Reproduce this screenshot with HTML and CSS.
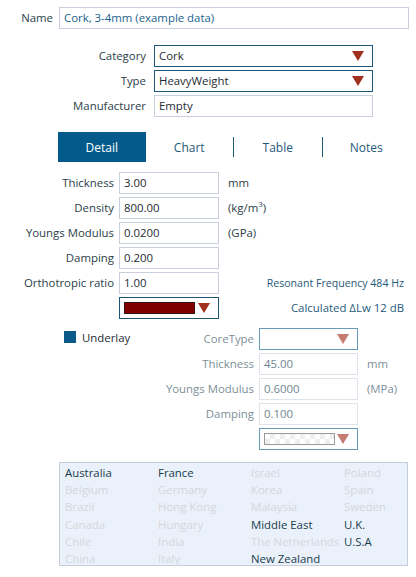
FILE: index.html
```html
<!DOCTYPE html>
<html lang="en">
<head>
  <meta charset="UTF-8" />
  <title>Material editor</title>
  <link rel="stylesheet" href="styles.css">
</head>
<body>

  <!-- Name -->
  <div class="name-row">
    <label class="lbl">Name</label>
    <div class="field name-field">Cork, 3-4mm (example data)</div>
  </div>

  <!-- Category / type -->
  <div class="head-grid">
    <label class="lbl">Category</label>
    <div class="field select">Cork<span class="arrow"></span></div>
    <label class="lbl">Type</label>
    <div class="field select">HeavyWeight<span class="arrow"></span></div>
    <label class="lbl">Manufacturer</label>
    <div class="field">Empty</div>
  </div>

  <!-- Tabs -->
  <div class="tabs">
    <div class="tab active">Detail</div>
    <div class="tab">Chart</div>
    <div class="tab sep">Table</div>
    <div class="tab sep">Notes</div>
  </div>

  <!-- Detail fields -->
  <div class="detail-grid">
    <label class="lbl">Thickness</label>
    <div class="field">3.00</div>
    <div class="unit">mm</div>

    <label class="lbl">Density</label>
    <div class="field">800.00</div>
    <div class="unit">(kg/m<sup>3</sup>)</div>

    <label class="lbl">Youngs Modulus</label>
    <div class="field">0.0200</div>
    <div class="unit">(GPa)</div>

    <label class="lbl">Damping</label>
    <div class="field">0.200</div>
    <div class="unit"></div>

    <label class="lbl">Orthotropic ratio</label>
    <div class="field">1.00</div>
    <div class="info">Resonant Frequency 484 Hz</div>

    <div></div>
    <div class="field select colour"><span class="swatch"></span><span class="arrow"></span></div>
    <div class="info calc">Calculated &Delta;Lw 12 dB</div>
  </div>

  <!-- Underlay -->
  <div class="underlay">
    <div class="check"><span class="box"></span>Underlay</div>
    <div class="under-grid">
      <label class="lbl">CoreType</label>
      <div class="field select"><span class="arrow"></span></div>
      <div class="unit"></div>

      <label class="lbl">Thickness</label>
      <div class="field">45.00</div>
      <div class="unit">mm</div>

      <label class="lbl">Youngs Modulus</label>
      <div class="field">0.6000</div>
      <div class="unit">(MPa)</div>

      <label class="lbl">Damping</label>
      <div class="field">0.100</div>
      <div class="unit"></div>

      <div></div>
      <div class="field select colour"><span class="swatch empty"></span><span class="arrow"></span></div>
      <div class="unit"></div>
    </div>
  </div>

  <!-- Regions -->
  <div class="regions">
    <span class="on">Australia</span>
    <span>Belgium</span>
    <span>Brazil</span>
    <span>Canada</span>
    <span>Chile</span>
    <span>China</span>
    <span class="on">France</span>
    <span>Germany</span>
    <span>Hong Kong</span>
    <span>Hungary</span>
    <span>India</span>
    <span>Italy</span>
    <span>Israel</span>
    <span>Korea</span>
    <span>Malaysia</span>
    <span class="on">Middle East</span>
    <span>The Netherlands</span>
    <span class="on">New Zealand</span>
    <span>Poland</span>
    <span>Spain</span>
    <span>Sweden</span>
    <span class="on">U.K.</span>
    <span class="on">U.S.A</span>
  </div>

</body>
</html>
```

FILE: styles.css
```css
* {
  box-sizing: border-box;
}

body {
  margin: 0;
  width: 416px;
  background: #ffffff;
  color: #1e2b33;
  font-family: "Open Sans", "Noto Sans", sans-serif;
  font-size: 11.4px;
}

.lbl {
  color: #2b3e49;
  text-align: right;
  line-height: 22px;
  white-space: nowrap;
}

.field {
  position: relative;
  height: 22px;
  line-height: 20px;
  padding: 0 4px;
  border: 1px solid #c9cfdd;
  color: #1e2b33;
  white-space: nowrap;
}

.select {
  border-color: #1f5577;
}

.arrow {
  position: absolute;
  right: 8px;
  top: 5px;
  width: 0;
  height: 0;
  border-left: 6px solid transparent;
  border-right: 6px solid transparent;
  border-top: 10px solid #a3301f;
}

/* Name */
.name-row {
  display: flex;
  align-items: center;
  gap: 6px;
  padding: 7px 7px 0 0;
}

.name-row .lbl {
  width: 53px;
}

.name-field {
  flex: 1;
  color: #1b5f8c;
}

/* Category / type / manufacturer */
.head-grid {
  display: grid;
  grid-template-columns: 146px 219px;
  column-gap: 8px;
  row-gap: 3px;
  margin-top: 16px;
}

/* Tabs */
.tabs {
  display: flex;
  margin: 15px 6px 0 58px;
  height: 30px;
}

.tab {
  flex: 1;
  display: flex;
  align-items: center;
  justify-content: center;
  color: #1f5a7a;
  font-size: 12px;
}

.tab.active {
  background: #045b8b;
  color: #ffffff;
}

.tab.sep {
  border-left: 1px solid #1f5a7a;
  border-image: linear-gradient(to bottom, transparent 6px, #1f5a7a 6px, #1f5a7a 24px, transparent 24px) 1;
}

/* Detail grid */
.detail-grid {
  display: grid;
  grid-template-columns: 114px 100px 1fr;
  column-gap: 5px;
  row-gap: 3px;
  margin: 10px 12px 0 0;
}

.unit {
  line-height: 22px;
  padding-left: 4px;
  color: #2b3e49;
}

.unit sup {
  font-size: 8px;
  line-height: 0;
}

.info {
  line-height: 22px;
  text-align: right;
  color: #1f5a7a;
  font-size: 10.6px;
}

.info.calc {
  font-size: 11.4px;
}

.colour .swatch {
  position: absolute;
  left: 4px;
  top: 4px;
  width: 71px;
  height: 12px;
  background: #800000;
  border: 1px solid #3a1010;
}

/* Underlay */
.underlay {
  display: flex;
  margin-top: 9px;
  padding-left: 64px;
}

.check {
  display: flex;
  align-items: flex-start;
  gap: 6px;
  padding-top: 3px;
  width: 100px;
  color: #1e2b33;
  line-height: 13px;
}

.box {
  width: 12px;
  height: 12px;
  background: #0b5a8a;
}

.under-grid {
  display: grid;
  grid-template-columns: 90px 99px 50px;
  column-gap: 5px;
  row-gap: 3px;
}

.under-grid .lbl {
  color: #7d8f99;
}

.under-grid .field {
  border-color: #dfe3eb;
  color: #6f8591;
}

.under-grid .select {
  border-color: #6a9bb6;
}

.under-grid .arrow {
  border-top-color: #c57b6f;
}

.under-grid .unit {
  color: #7d8f99;
}

.swatch.empty {
  background-color: #ffffff;
  background-image: linear-gradient(45deg, #eeeeee 25%, transparent 25%, transparent 75%, #eeeeee 75%),
    linear-gradient(45deg, #eeeeee 25%, transparent 25%, transparent 75%, #eeeeee 75%);
  background-size: 10px 10px;
  background-position: 0 0, 5px 5px;
  border-color: #9a9a9a;
}

/* Regions list */
.regions {
  display: grid;
  grid-template-rows: repeat(6, 17.2px);
  grid-template-columns: repeat(3, 93px) 1fr;
  grid-auto-flow: column;
  margin: 12px 8px 0 59px;
  padding: 1px 0 0 5px;
  height: 104px;
  background: #ebf1fa;
  border: 1px solid #c5cdd9;
  line-height: 17px;
}

.regions span {
  color: #d3d7dc;
  white-space: nowrap;
}

.regions .on {
  color: #183c4c;
}
```
